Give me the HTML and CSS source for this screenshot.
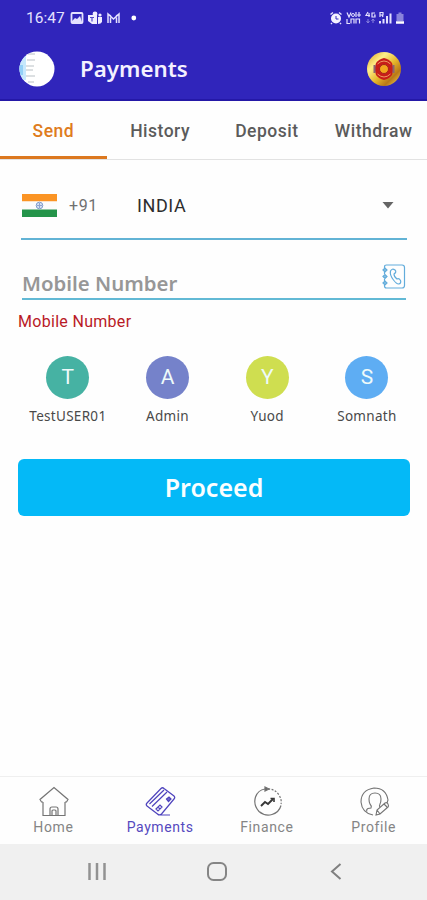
FILE: index.html
```html
<!DOCTYPE html>
<html lang="en">
<head>
<meta charset="utf-8">
<title>Payments</title>
<link rel="stylesheet" href="styles.css">
</head>
<body>
<div class="screen">
  <header class="top">
    <div class="status">
      <span class="clock">16:47</span>
      <svg class="status-left" width="70" height="14" viewBox="0 0 70 14" fill="none" stroke="#e4e1ff">
        <rect x="1.500" y="2" width="11" height="10" rx="1" stroke-width="1.800"/>
        <path d="M2 10l3-3 2 1 3-3 2 6H2z" fill="#e4e1ff" stroke="none"/>
        <g fill="#f0eeff" stroke="none"><circle cx="25" cy="3" r="2.400"/><circle cx="30" cy="4" r="1.600"/><path d="M18 4h9v9h-5l-4-3zM28 6h4v5q-1 2-4 2z"/></g>
        <path d="M20 6.500h4M22 6.500v4" stroke="#5148cb" stroke-width="1.200"/>
        <path d="M38 12V3l5.500 5L49 3v9M40.500 12V6.500M46.500 12V6.500M38 3l3 2M49 3l-3 2" stroke-width="1.500"/>
        <circle cx="63.800" cy="7" r="2.400" fill="#fff" stroke="none"/>
      </svg>
      <svg class="status-right" width="76" height="14" viewBox="0 0 76 14" fill="none" stroke="#e4e1ff">
        <circle cx="7" cy="7.500" r="5" fill="#f4f2ff" stroke="none"/><path d="M1.500 3.500l2.500-2M10 1.500l2.500 2M3 12l-1 1M11 12l1 1" stroke-width="1.500"/><path d="M7 5v3h2.500" stroke="#3027bd"/>
        <path d="M18 1.500l2 4.500 2-4.500M27 1v5M30 1v5M28 4h4M18 8v4.500h3M22 12.500V8h3v4.500M27 12.500V8h3.500v4.500" stroke-width="1.200"/>
        <circle cx="24" cy="4" r="1.500"/>
        <path d="M39 1l-2 3.500h4M40 2v4M46 2h-3v4h3V4h-1" stroke-width="1.200"/><path d="M39 8v4M37.500 10l1.500 2 1.500-2M44 12V8M42.500 10l1.500-2 1.500 2" stroke="#8a83e0"/>
        <path d="M51 6V1.500h3V4h-3M54 6l-1-2" stroke-width="1.200"/><path d="M51 12.500V10M54.500 12.500V8M58 12.500V5M61.500 12.500V2.500" stroke-width="2"/>
        <path d="M67.500 3h2V1.500h3V3h2v7h-7z" fill="#8983dc" stroke="none"/><path d="M67 11.500h8" stroke="#fff" stroke-width="2.500"/>
      </svg>
    </div>
    <div class="appbar">
      <svg class="avatar" width="36" height="36" viewBox="0 0 36 36">
        <defs><clipPath id="av"><circle cx="18" cy="18" r="17.500"/></clipPath></defs>
        <g clip-path="url(#av)"><rect width="36" height="36" fill="#fff"/><rect y="5" width="7" height="24" fill="#c7e8fc"/><rect y="14" width="4" height="10" fill="#93d0f8"/>
        <path d="M9 3h7M8 9h8M7 15h8M7 19h7M7 25h9M9 31h6" stroke="#b9c0c5"/></g>
      </svg>
      <h1>Payments</h1>
      <svg class="emblem" width="36" height="36" viewBox="0 0 36 36">
        <defs><linearGradient id="gold" x1="0" y1="0" x2="1" y2="1"><stop offset="0" stop-color="#d99b1b"/><stop offset=".3" stop-color="#fff08a"/><stop offset=".55" stop-color="#e5b52b"/><stop offset=".75" stop-color="#b97818"/><stop offset="1" stop-color="#ffe35a"/></linearGradient></defs>
        <circle cx="18" cy="18" r="17" fill="url(#gold)"/>
        <path d="M10 12q3-4 8-5 5 1 8 5l1.500 6-1.500 6q-3 4-8 5-5-1-8-5L8.500 18z" fill="#c81d18"/>
        <path d="M8.500 14v8M27.500 14v8" stroke="#8a6470" stroke-width="2"/>
        <path d="M11.500 13q6.500-6 13 0M11.500 23q6.500 6 13 0" fill="none" stroke="#ef9a62"/>
        <circle cx="18" cy="18" r="4.500" fill="#f3a51e" stroke="#a5251a"/>
      </svg>
    </div>
  </header>
  <nav class="tabs">
    <a class="tab active">Send</a><a class="tab">History</a><a class="tab">Deposit</a><a class="tab">Withdraw</a>
  </nav>
  <main>
    <div class="country">
      <svg width="35" height="23" viewBox="0 0 35 23"><rect width="35" height="7.500" fill="#fb9424"/><rect y="7.500" width="35" height="8" fill="#fcfcfc"/><rect y="15.500" width="35" height="7.500" fill="#24944a"/><circle cx="17.500" cy="11.500" r="3.300" fill="#d6e1f2" stroke="#7f9ccc"/><path d="M15 11.500h5M17.500 9v5" stroke="#8fa4cf"/></svg>
      <span class="code">+91</span><span class="name">INDIA</span>
      <svg class="caret" width="12" height="7" viewBox="0 0 12 7"><path d="M.5 0h11L6 6.500z" fill="#656565"/></svg>
    </div>
    <div class="mobile">
      <span class="placeholder">Mobile Number</span>
      <svg class="book" width="24" height="26" viewBox="0 0 24 26" fill="none" stroke="#62acdb" stroke-width="1.200">
        <path d="M2.500 4V3q0-2 2-2H20q2.500 0 2.500 2.500v18Q22.500 24 20 24H4.500q-2 0-2-2v-1M2.500 8v2M2.500 15v2"/>
        <path d="M1 6l2-2 2 2-2 2zM1 12.500l2-2 2 2-2 2zM1 19l2-2 2 2-2 2z" fill="#8dc2e4"/>
        <path d="M8.500 7Q10 4 13 6q2 2-1 4 0 3 3 5 2-1 3.500 1.500 1 3-2 3.500-2 0-5-4-4-5-3-9z"/>
      </svg>
    </div>
    <p class="error">Mobile Number</p>
    <div class="people">
      <div class="person"><span class="dot teal">T</span><span class="label">TestUSER01</span></div>
      <div class="person"><span class="dot indigo">A</span><span class="label">Admin</span></div>
      <div class="person"><span class="dot lime">Y</span><span class="label">Yuod</span></div>
      <div class="person"><span class="dot blue">S</span><span class="label">Somnath</span></div>
    </div>
    <button class="proceed">Proceed</button>
  </main>
  <nav class="bottom">
    <a class="item"><svg width="32" height="32" viewBox="0 0 32 32" fill="none" stroke="#747474" stroke-width="1.200"><path d="M6 16v13.500h22V16M6 16H4.500L3 13.500 17 1.500l14 12L29.500 16H28M13 29v-6q0-2 2-2h4q2 0 2 2v6M15 29v-4q0-1 1-1h2q1 0 1 1v4"/></svg><span>Home</span></a>
    <a class="item on"><svg width="32" height="32" viewBox="0 0 32 32" fill="none" stroke="#4e43bd" stroke-width="1.200"><path d="M3 17L17 2.500q1.500-1.500 3 0L30 10q1.500 1.500 0 3L17.500 28q-2 2-4 0L3 20q-1.500-1.500 0-3zM5.500 18L20 4M8 20.500L23 6M15 29h11"/><path d="M22.500 13l2.500-2 2 2-2.500 2.500z" fill="#7067cb"/><path d="M12 23l4-4 2 2-4 4zM14 21l2 2"/></svg><span>Payments</span></a>
    <a class="item"><svg width="32" height="32" viewBox="0 0 32 32" fill="none" stroke="#747474" stroke-width="1.200"><path d="M14 3Q7 4 4.500 11 2 19 8 25.500q6 5 13 3 7-2 9-9"/><path d="M17 3q7 0 11 6 3 5 2 9" stroke-dasharray="2 1.500"/><path d="M14 1l4 2-4 2z" fill="#666"/><path d="M10 20l4-4 3 2 5-5" stroke="#383838" stroke-width="1.900"/><path d="M19.500 12.500H23V16" stroke="#383838" stroke-width="1.600"/></svg><span>Finance</span></a>
    <a class="item"><svg width="32" height="32" viewBox="0 0 32 32" fill="none" stroke="#747474" stroke-width="1.100"><path d="M15 29Q4 27 3 16 3 4 16 2q12 0 14 12l-1 3"/><path d="M9 25.500q-1-2 1-3l3-.5q1-2-1-4-1-2-1-5 0-6 6-6t6 6q0 3-1 5-1 2 0 3"/><path d="M18 29l1-5 8-7q2-1 3 1t0 3l-8 7zM19 24l3 4M26 18l3 3"/></svg><span>Profile</span></a>
  </nav>
  <div class="system">
    <svg width="20" height="20" viewBox="0 0 20 20"><path d="M2.500 1v17M10 1v17M17.500 1v17" stroke="#929292" stroke-width="2.500"/></svg>
    <svg width="22" height="22" viewBox="0 0 22 22"><rect x="1" y="2" width="18" height="17" rx="5.500" fill="none" stroke="#858585" stroke-width="2"/></svg>
    <svg width="14" height="20" viewBox="0 0 14 20"><path d="M11.500 2L3 9.500l8.500 7.500" fill="none" stroke="#808080" stroke-width="2"/></svg>
  </div>
</div>
</body>
</html>
```
FILE: styles.css
```css
* { box-sizing: border-box; }
body { margin: 0; background: #fefefe; font-family: Roboto, "Liberation Sans", sans-serif; }
.screen { width: 427px; height: 900px; display: flex; flex-direction: column; background: #fefefe; }
.top { height: 101px; background: #3025bb; border-bottom: 2px solid #2418a7; color: #fff; }
.status { height: 36px; padding: 0 22px 0 26px; display: flex; align-items: center; }
.clock { width: 44px; font-size: 15.5px; color: #e4e1ff; white-space: nowrap; }
.status-right { margin-left: auto; }
.appbar { height: 65px; padding: 0 25px 0 19px; display: flex; align-items: center; }
.appbar h1 { margin: 0 auto 0 25px; font: 600 22.3px/32px "Noto Sans", sans-serif; color: #f4f1ff; }
.tabs { height: 59px; display: grid; grid-template-columns: repeat(4, 1fr); border-bottom: 1px solid #e2e2e2; }
.tab { display: flex; align-items: center; justify-content: center; padding-top: 5px; font-size: 17.5px; font-weight: 500; letter-spacing: 0.5px; color: #5b5b5b; border-bottom: 3px solid transparent; }
.tab.active { color: #de7c1d; border-color: #dc781f; }
main { flex: 1; padding: 0 17px 0 18px; }
.country { height: 80px; margin: 0 3px 0 3px; padding: 13px 13px 0 1px; display: flex; align-items: center; border-bottom: 2px solid #62b3d5; }
.code { width: 68px; margin-left: 12px; font-size: 16px; letter-spacing: 0.6px; color: #707070; }
.name { font-size: 18px; letter-spacing: 0.6px; color: #2d2d2d; }
.caret { margin-left: auto; }
.mobile { height: 60px; margin: 0 4px 0 4px; display: flex; align-items: center; justify-content: space-between; border-bottom: 2px solid #62b9d5; }
.placeholder { padding-top: 28px; font: 600 20.4px/28px "Noto Sans", sans-serif; color: #979797; }
.book { margin-top: 16px; }
.error { margin: 12px 0 0; font-size: 16px; line-height: 20px; letter-spacing: 0.3px; color: #b91a26; }
.people { display: grid; grid-template-columns: repeat(4, 99.7px); margin: 24px 0 0; }
.person { display: flex; flex-direction: column; align-items: center; }
.dot { width: 43px; height: 43px; border-radius: 50%; color: #eefafa; font-size: 21px; line-height: 43px; text-align: center; }
.teal { background: #46b2a3; }
.indigo { background: #7582ca; }
.lime { background: #cfde50; }
.blue { background: #5eadf3; }
.label { margin-top: 7px; font: 13.5px/20px "Noto Sans", sans-serif; letter-spacing: 0.3px; color: #494949; }
.proceed { display: block; width: 100%; height: 57px; margin: 33px 0 0; padding: 0 0 1px; border: 0; border-radius: 6px; background: #04b9f7; color: #fafeff; font: 600 25px/32px "Noto Sans", sans-serif; }
.bottom { height: 68px; display: grid; grid-template-columns: repeat(4, 1fr); border-top: 1px solid #efefef; }
.item { display: flex; flex-direction: column; align-items: center; padding-top: 9px; font-size: 14px; line-height: 18px; letter-spacing: 0.6px; color: #858585; }
.item.on { color: #5549be; }
.system { height: 56px; background: #f0f0f0; display: flex; align-items: center; justify-content: space-between; padding: 0 84px 0 87px; }
```
